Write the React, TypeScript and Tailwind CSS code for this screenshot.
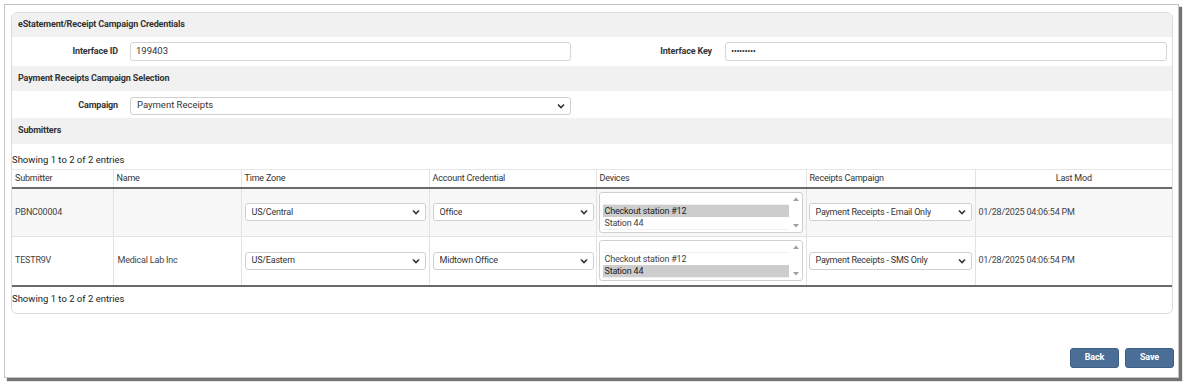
import React from "react";

const font = { fontFamily: "Roboto, 'Liberation Sans', sans-serif" };

function Chevron() {
  return (
    <svg width="8" height="6" viewBox="0 0 8 6" className="shrink-0">
      <polyline points="1,1.5 4,4.5 7,1.5" fill="none" stroke="#333" strokeWidth="1.6" />
    </svg>
  );
}

function Select({ value, className }: { value: string; className: string }) {
  return (
    <div
      className={`flex items-center justify-between border border-[#d0d0d0] rounded-[3px] bg-white pl-[6px] pr-[5px] text-[#333] ${className}`}
    >
      <span className="truncate">{value}</span>
      <Chevron />
    </div>
  );
}

function ListBox({ selected }: { selected: number }) {
  const opts = ["Checkout station #12", "Station 44"];
  return (
    <div className="relative h-[41px] w-[204px] border border-[#d0d0d0] rounded-[3px] bg-white">
      <div className="absolute left-[3px] top-[11px] w-[186px] border-t border-b border-[#f0f0f0]">
        {opts.map((o, i) => (
          <div
            key={o}
            className={`h-[12px] leading-[12px] pl-[2px] ${i === selected ? "bg-[#cdcdcd] text-[#222]" : "text-[#444]"}`}
          >
            {o}
          </div>
        ))}
      </div>
      <svg className="absolute right-[3px] top-[4px]" width="6" height="4" viewBox="0 0 6 4">
        <polygon points="0,4 3,0.5 6,4" fill="#a0a0a0" />
      </svg>
      <svg className="absolute right-[3px] bottom-[4px]" width="6" height="4" viewBox="0 0 6 4">
        <polygon points="0,0 3,3.5 6,0" fill="#a0a0a0" />
      </svg>
    </div>
  );
}

function SectionHeader({ title, h }: { title: string; h: string }) {
  return (
    <div className={`${h} bg-[#f1f1f1] flex items-center pl-[6px] font-bold text-[9px] tracking-[-0.15px] text-[#333]`}>
      {title}
    </div>
  );
}

export default function App() {
  const rows = [
    {
      sub: "PBNC00004",
      name: "",
      tz: "US/Central",
      acct: "Office",
      sel: 0,
      camp: "Payment Receipts - Email Only",
      mod: "01/28/2025 04:06:54 PM",
      bg: "bg-[#f7f7f7]",
    },
    {
      sub: "TESTR9V",
      name: "Medical Lab Inc",
      tz: "US/Eastern",
      acct: "Midtown Office",
      sel: 1,
      camp: "Payment Receipts - SMS Only",
      mod: "01/28/2025 04:06:54 PM",
      bg: "bg-white",
    },
  ];
  return (
    <div className="w-[1183px] h-[385px] bg-white text-[9.5px] text-[#333] overflow-hidden" style={font}>
      <div className="ml-[4px] mt-[4px] w-[1175px] h-[374px] border border-[#c4c4c4] bg-white shadow-[3px_3px_1px_rgba(0,0,0,0.55)] pl-[6px] pt-[7px] flex flex-col">
        <div className="w-[1162px] h-[302px] border border-[#dcdcdc] rounded-[6px] overflow-hidden flex flex-col">
          <SectionHeader title="eStatement/Receipt Campaign Credentials" h="h-[24px]" />
          <div className="h-[29px] flex items-center">
            <div className="w-[106px] text-right font-bold text-[9px] tracking-[-0.15px]">Interface ID</div>
            <div className="ml-[12px] w-[441px] h-[19px] border border-[#d6d6d6] rounded-[3px] flex items-center pl-[5px]">
              199403
            </div>
            <div className="w-[141px] text-right font-bold text-[9px] tracking-[-0.15px]">Interface Key</div>
            <div className="ml-[13px] w-[442px] h-[19px] border border-[#d6d6d6] rounded-[3px] flex items-center pl-[5px] tracking-[-0.5px]">
              •••••••••
            </div>
          </div>
          <SectionHeader title="Payment Receipts Campaign Selection" h="h-[25px]" />
          <div className="h-[27px] flex items-center pt-[2px]">
            <div className="w-[106px] text-right font-bold text-[9px] tracking-[-0.15px]">Campaign</div>
            <Select value="Payment Receipts" className="ml-[12px] w-[441px] h-[18px]" />
          </div>
          <SectionHeader title="Submitters" h="h-[26px]" />
          <div className="h-[25px] flex items-end pb-[2px] text-[#222]">Showing 1 to 2 of 2 entries</div>
          <table className="table-fixed border-collapse w-[1160px] text-[#444] text-[9px] tracking-[-0.2px]">
            <colgroup>
              <col className="w-[101px]" />
              <col className="w-[128px]" />
              <col className="w-[188px]" />
              <col className="w-[167px]" />
              <col className="w-[210px]" />
              <col className="w-[169px]" />
              <col className="w-[197px]" />
            </colgroup>
            <thead>
              <tr className="h-[18px] border-t border-[#e6e6e6] border-b-2 border-b-[#6a6a6a] text-[#333]">
                <th className="font-normal text-left pl-[3px] border-r border-[#e2e2e2]">Submitter</th>
                <th className="font-normal text-left pl-[3px] border-r border-[#e2e2e2]">Name</th>
                <th className="font-normal text-left pl-[3px] border-r border-[#e2e2e2]">Time Zone</th>
                <th className="font-normal text-left pl-[3px] border-r border-[#e2e2e2]">Account Credential</th>
                <th className="font-normal text-left pl-[3px] border-r border-[#e2e2e2]">Devices</th>
                <th className="font-normal text-left pl-[3px] border-r border-[#e2e2e2]">Receipts Campaign</th>
                <th className="font-normal text-center">Last Mod</th>
              </tr>
            </thead>
            <tbody>
              {rows.map((r, i) => (
                <tr
                  key={r.sub}
                  className={`h-[49px] ${r.bg} ${i === 1 ? "border-b-2 border-b-[#6a6a6a]" : "border-b border-[#e2e2e2]"}`}
                >
                  <td className="pl-[3px] border-r border-[#e2e2e2]">{r.sub}</td>
                  <td className="pl-[4px] border-r border-[#e2e2e2]">{r.name}</td>
                  <td className="pl-[3px] pr-[3px] border-r border-[#e2e2e2]">
                    <Select value={r.tz} className="w-[181px] h-[18px]" />
                  </td>
                  <td className="pl-[3px] pr-[3px] border-r border-[#e2e2e2]">
                    <Select value={r.acct} className="w-[161px] h-[18px]" />
                  </td>
                  <td className="pl-[2px] border-r border-[#e2e2e2]">
                    <ListBox selected={r.sel} />
                  </td>
                  <td className="pl-[2px] border-r border-[#e2e2e2]">
                    <Select value={r.camp} className="w-[163px] h-[18px]" />
                  </td>
                  <td className="pl-[3px]">{r.mod}</td>
                </tr>
              ))}
            </tbody>
          </table>
          <div className="h-[25px] flex items-center text-[#222]">Showing 1 to 2 of 2 entries</div>
        </div>
        <div className="flex justify-end gap-[6px] mt-[34px] pr-[4px]">
          <button className="w-[49px] h-[20px] rounded-[3px] bg-[#4b6e96] text-white font-bold text-[9px] tracking-[-0.15px] border border-[#3f5f85]">
            Back
          </button>
          <button className="w-[49px] h-[20px] rounded-[3px] bg-[#4b6e96] text-white font-bold text-[9px] tracking-[-0.15px] border border-[#3f5f85]">
            Save
          </button>
        </div>
      </div>
    </div>
  );
}
